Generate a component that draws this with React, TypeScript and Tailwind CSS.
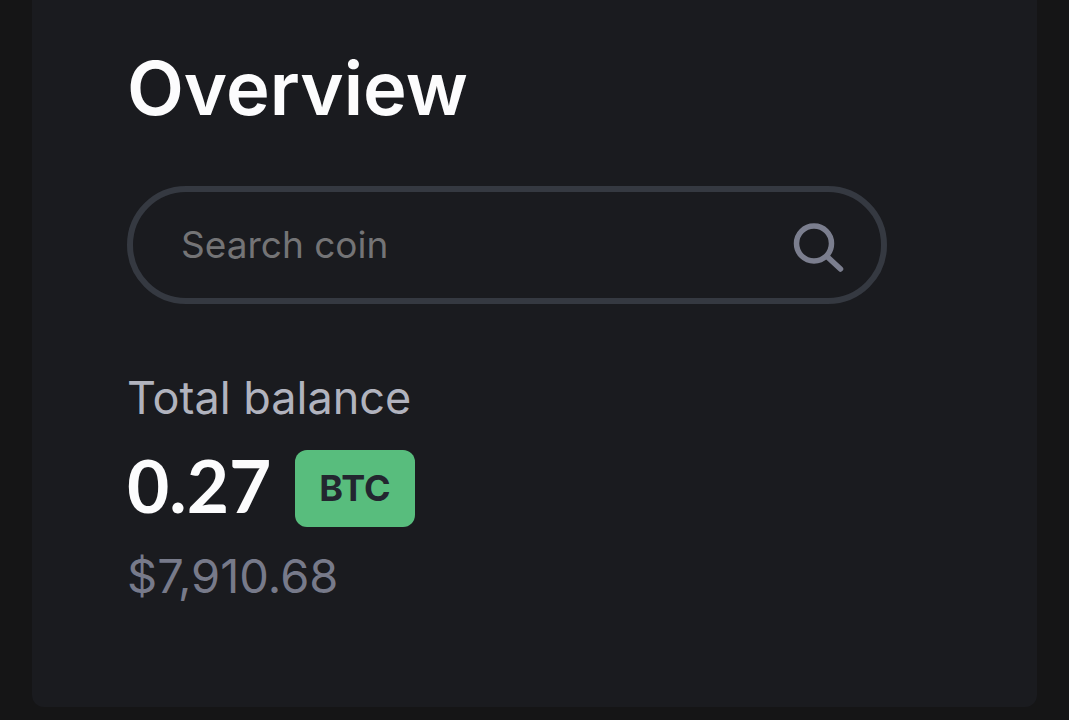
import { useState } from "react";

export default function App() {
  const [query, setQuery] = useState("");

  return (
    <div className="min-h-screen bg-[#151516] px-8 pb-3 font-['Inter',sans-serif]">
      <main className="min-h-[707px] rounded-b-xl bg-[#1a1b1f] px-[95px] pt-[46px]">
        <h1 className="text-[74px] leading-[84px] font-semibold text-[#fcfcfd]">Overview</h1>

        {/* Search */}
        <form
          role="search"
          onSubmit={(e) => e.preventDefault()}
          className="mt-14 flex h-[118px] w-full max-w-[760px] items-center rounded-full border-[6px] border-[#353941] pr-[34px] pl-12"
        >
          <input
            type="text"
            aria-label="Search coin"
            placeholder="Search coin"
            value={query}
            onChange={(e) => setQuery(e.target.value)}
            className="min-w-0 flex-1 bg-transparent text-[37px] text-white placeholder:text-[#747476] focus:outline-none"
          />
          <button type="submit" aria-label="Search" className="shrink-0">
            <svg
              width="54"
              height="54"
              viewBox="0 0 54 54"
              fill="none"
              stroke="#7b7e8e"
              strokeWidth="5.5"
              strokeLinecap="round"
            >
              <circle cx="21" cy="25.5" r="17.5" />
              <path d="M34 38.5L47.5 51" />
            </svg>
          </button>
        </form>

        {/* Balance */}
        <section className="mt-[66px]">
          <h2 className="text-[45px] leading-[56px] text-[#b1b3be]">Total balance</h2>
          <div className="mt-6 flex items-center gap-6">
            <span className="pb-2 font-['Lato',sans-serif] text-[73px] leading-[68px] font-bold text-[#fcfcfd]">
              0.27
            </span>
            <span className="rounded-xl bg-[#58bd7d] px-6 py-4 text-4xl leading-[45px] font-bold text-[#23262f]">
              BTC
            </span>
          </div>
          <p className="mt-[21px] text-[47px] leading-[56px] text-[#777a8a]">$7,910.68</p>
        </section>
      </main>
    </div>
  );
}
